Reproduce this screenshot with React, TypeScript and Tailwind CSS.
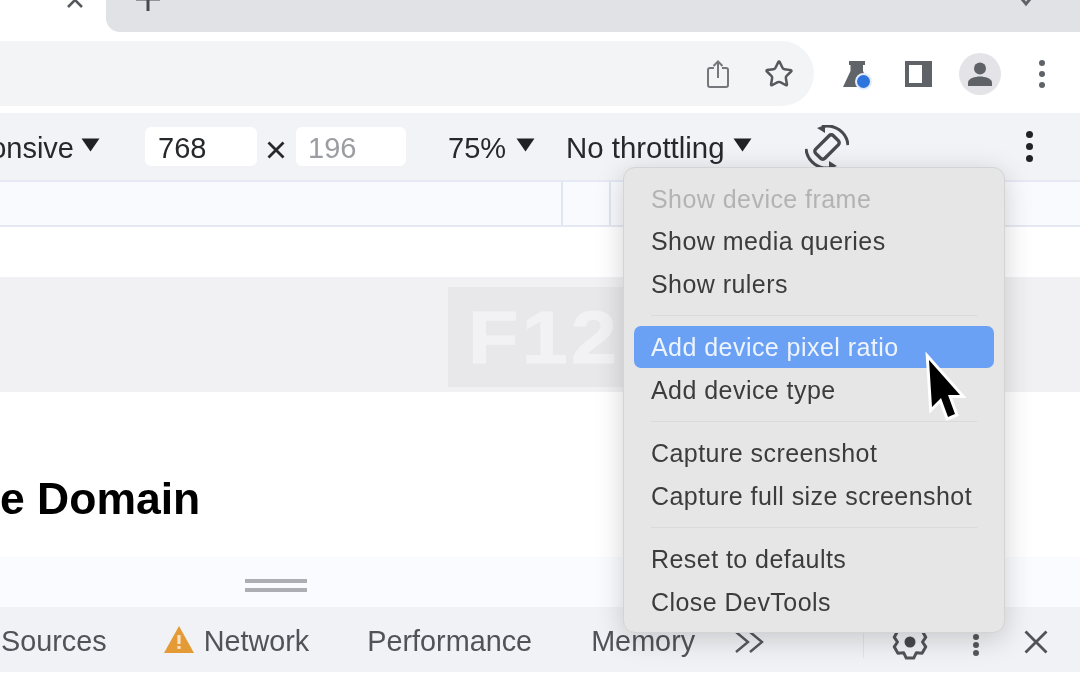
import { Star } from "lucide-react";

const font = "font-['Liberation_Sans',Arial,sans-serif]";

function Caret({ className = "" }: { className?: string }) {
  return (
    <svg width="19" height="14" viewBox="0 0 19 14" className={className}>
      <path d="M0.5 0.5H18.5L9.5 13.5Z" fill="#1f2125" />
    </svg>
  );
}

function Dots({ r = 3, gap = 11, fill = "#5f6368" }: { r?: number; gap?: number; fill?: string }) {
  const h = gap * 2 + r * 2;
  return (
    <svg width={r * 2} height={h} viewBox={`0 0 ${r * 2} ${h}`}>
      <circle cx={r} cy={r} r={r} fill={fill} />
      <circle cx={r} cy={r + gap} r={r} fill={fill} />
      <circle cx={r} cy={r + gap * 2} r={r} fill={fill} />
    </svg>
  );
}

// six lobed outline of the devtools gear
function gearPath(cx: number, cy: number) {
  const at = (deg: number, r: number) => {
    const a = (deg * Math.PI) / 180;
    return `${cx + r * Math.cos(a)} ${cy + r * Math.sin(a)}`;
  };
  const parts: string[] = [];
  for (let k = 0; k < 6; k++) {
    const a = 90 + k * 60;
    parts.push(at(a - 13, 16.5), at(a + 13, 16.5), at(a + 30, 12.5));
  }
  return `M${parts.join("L")}Z`;
}

function MenuItem({ label, disabled, active }: { label: string; disabled?: boolean; active?: boolean }) {
  return (
    <div
      className={`mx-[10px] flex h-[42.5px] items-center rounded-[7px] pt-[2px] pl-[17px] text-[25px] tracking-[0.45px] whitespace-nowrap ${
        active ? "bg-[#6ba1f5] text-[#eef4fe]" : disabled ? "text-[#b3b3b3]" : "text-[#3c3c3c]"
      }`}
    >
      {label}
    </div>
  );
}

function MenuSep() {
  return (
    <div className="flex h-[21px] items-center pr-[27px] pl-[27px]">
      <div className="h-px w-full bg-[#dadada]" />
    </div>
  );
}

function OptionsMenu() {
  return (
    <div className="absolute top-[167px] left-[623px] w-[382px] rounded-[12px] border border-[#d4d4d4] bg-[#e6e6e6] pt-[9px] pb-[9px] shadow-[0_6px_28px_rgba(0,0,0,0.18)]">
      <MenuItem label="Show device frame" disabled />
      <MenuItem label="Show media queries" />
      <MenuItem label="Show rulers" />
      <MenuSep />
      <MenuItem label="Add device pixel ratio" active />
      <MenuItem label="Add device type" />
      <MenuSep />
      <MenuItem label="Capture screenshot" />
      <MenuItem label="Capture full size screenshot" />
      <MenuSep />
      <MenuItem label="Reset to defaults" />
      <MenuItem label="Close DevTools" />
    </div>
  );
}

function Cursor() {
  return (
    <svg className="absolute top-[350px] left-[922px]" width="50" height="76" viewBox="0 0 50 76">
      <path
        d="M7 10L10 57L19 48L26 67L33 64L26 45L38 45Z"
        fill="#000"
        stroke="#fff"
        strokeWidth="6"
        paintOrder="stroke"
      />
    </svg>
  );
}

function TabStrip() {
  return (
    <div className="flex h-[32px] overflow-hidden">
      <div className="relative w-[106px] bg-white">
        <svg className="absolute top-[-9px] left-[66px]" width="18" height="18" viewBox="0 0 18 18">
          <path d="M2 2L16 16M16 2L2 16" stroke="#55585c" strokeWidth="2.6" />
        </svg>
      </div>
      <div className="relative flex-1 rounded-bl-[14px] bg-[#e1e2e6]">
        <svg className="absolute top-[-13px] left-[30px]" width="24" height="24" viewBox="0 0 24 24">
          <path d="M12 0V24M0 12H24" stroke="#46494e" strokeWidth="3" />
        </svg>
        <svg className="absolute top-[-9px] left-[908px]" width="24" height="16" viewBox="0 0 24 16">
          <path d="M3 2L12 13L21 2" fill="none" stroke="#5f6368" strokeWidth="3" />
        </svg>
      </div>
    </div>
  );
}

function AddressRow() {
  return (
    <div className="flex h-[81px] items-start bg-white pt-[9px]">
      <div className="flex h-[65px] w-[814px] items-center rounded-r-[33px] bg-[#f3f4f6] pl-[707px]">
        <svg width="22" height="28" viewBox="0 0 22 28" fill="none" stroke="#74777c" strokeWidth="2">
          <path d="M7 8H3A2 2 0 0 0 1 10V25A2 2 0 0 0 3 27H19A2 2 0 0 0 21 25V10A2 2 0 0 0 19 8H15" />
          <path d="M11 18V2M6.5 6L11 1.5L15.5 6" />
        </svg>
        <Star className="ml-[35px]" size={30} color="#55585c" strokeWidth={2} />
      </div>
      <div className="flex h-[65px] flex-1 items-center">
        <div className="relative ml-[29px] h-[26px] w-[28px]">
          <svg width="28" height="26" viewBox="0 0 28 26">
            <path d="M6 0H22V4H20V10L27 26H0L7.5 10V4H6Z" fill="#606367" />
          </svg>
          <div className="absolute top-[14px] left-[14px] h-[13px] w-[13px] rounded-full bg-[#2f73dc] ring-2 ring-[#e3ecfb]" />
        </div>
        <div className="ml-[34px] h-[26px] w-[27px] border-y-[4px] border-r-[10px] border-l-[4px] border-[#5f6368]" />
        <div className="ml-[27px] flex h-[42px] w-[42px] items-center justify-center rounded-full bg-[#e3e3e8]">
          <svg width="26" height="26" viewBox="0 0 26 26" fill="#5f6368">
            <circle cx="13" cy="7.5" r="6" />
            <path d="M1 25V21.5C1 17.5 8 15.5 13 15.5S25 17.5 25 21.5V25Z" />
          </svg>
        </div>
        <div className="ml-[38px] flex items-center">
          <Dots />
        </div>
      </div>
    </div>
  );
}

function DeviceToolbar() {
  return (
    <div className="flex h-[67px] items-center bg-[#f1f3f6] text-[29px] text-[#26282c]">
      <div className="flex w-[74px] shrink-0 justify-end overflow-hidden pt-[4px] whitespace-nowrap">Responsive</div>
      <Caret className="ml-[7px] -translate-y-[2px]" />
      <div className="ml-[45px] flex h-[39px] w-[112px] items-center rounded-[6px] bg-white pt-[4px] pl-[13px]">768</div>
      <svg className="mt-[6px] ml-[9px]" width="20" height="20" viewBox="0 0 20 20">
        <path d="M2.5 2.5L17.5 17.5M17.5 2.5L2.5 17.5" stroke="#26282c" strokeWidth="2.8" />
      </svg>
      <div className="ml-[10px] flex h-[39px] w-[110px] items-center rounded-[6px] bg-white pt-[4px] pl-[12px] text-[#9b9da1]">
        196
      </div>
      <div className="ml-[42px] pt-[4px]">75%</div>
      <Caret className="ml-[10px] -translate-y-[2px]" />
      <div className="ml-[31px] pt-[4px] text-[29.4px] whitespace-nowrap">No throttling</div>
      <Caret className="ml-[8px] -translate-y-[2px]" />
      <svg className="ml-[53px]" width="44" height="44" viewBox="0 0 44 44" fill="none" stroke="#46494e" strokeWidth="3">
        <rect x="15.5" y="9.5" width="13" height="25" rx="3" strokeWidth="3.4" transform="rotate(45 22 22)" />
        <path d="M17 1.6A21 21 0 0 1 43 20" />
        <path d="M1 24A21 21 0 0 0 27 42.4" />
        <path d="M12 3L20 0V8ZM32 41L24 44V36Z" fill="#46494e" stroke="none" />
      </svg>
      <div className="ml-[177px] flex items-center">
        <Dots r={3.5} gap={12} fill="#202226" />
      </div>
    </div>
  );
}

function MediaBar() {
  return (
    <div className="flex h-[47px] border-y-2 border-[#e4e9f3] bg-[#f8fafe] pl-[561px]">
      <div className="h-[43px] w-[2px] bg-[#dfe6f3]" />
      <div className="ml-[46px] h-[43px] w-[2px] bg-[#dfe6f3]" />
    </div>
  );
}

function PageArea() {
  return (
    <div className="relative flex h-[380px] flex-col bg-white">
      <div className="mt-[50px] h-[115px] bg-[#f1f1f3]" />
      <div className="mt-[82px] text-[44.5px] leading-[50px] font-bold text-black">e Domain</div>
      <div className="mt-[33px] flex flex-1 flex-col gap-[5px] bg-[#fafbfe] pt-[22px] pl-[245px]">
        <div className="h-[4px] w-[62px] bg-[#acaeb3]" />
        <div className="h-[4px] w-[62px] bg-[#acaeb3]" />
      </div>
      <div className="absolute top-[60px] left-[448px] flex h-[100px] w-[194px] items-center bg-[#e8e8ea] pl-[20px] text-[75px] font-bold tracking-[3px] text-[#f2f2f4] [-webkit-text-stroke:1px_#f2f2f4]">
        <span className="inline-block origin-left scale-x-[1.1]">F12</span>
      </div>
    </div>
  );
}

function DevToolsTabs() {
  return (
    <div className="flex h-[65px] items-center bg-[#f1f2f5] pt-[4px] text-[28.8px] text-[#505358]">
      <div className="ml-[1px]">Sources</div>
      <svg className="mt-[-4px] ml-[57px]" width="30" height="27" viewBox="0 0 30 27">
        <path d="M15 0L30 27H0Z" fill="#e59b35" />
        <path d="M13.4 9H16.6V18H13.4ZM13.4 20H16.6V23H13.4Z" fill="#f5e2c5" />
      </svg>
      <div className="ml-[10px]">Network</div>
      <div className="ml-[58px]">Performance</div>
      <div className="ml-[59px]">Memory</div>
      <svg className="ml-[39px]" width="30" height="24" viewBox="0 0 30 24" fill="none" stroke="#55585c" strokeWidth="2.4">
        <path d="M2 2L14 12L2 22M16 2L28 12L16 22" />
      </svg>
      <div className="ml-[99px] h-[32px] w-px bg-[#e3e4e8]" />
      <svg className="ml-[28px]" width="36" height="36" viewBox="0 0 36 36" fill="none" stroke="#505358" strokeWidth="3">
        <path d={gearPath(18, 18)} strokeLinejoin="round" />
        <circle cx="18" cy="18" r="5.5" fill="#45484d" stroke="none" />
      </svg>
      <div className="mt-[7px] ml-[45px] flex items-center">
        <Dots r={3} gap={8} fill="#55585c" />
      </div>
      <svg className="ml-[45px]" width="24" height="24" viewBox="0 0 24 24">
        <path d="M1.5 1.5L22.5 22.5M22.5 1.5L1.5 22.5" stroke="#505358" strokeWidth="2.8" />
      </svg>
    </div>
  );
}

export default function App() {
  return (
    <div className={`relative h-[678px] w-[1080px] overflow-hidden bg-white blur-[0.6px] ${font}`}>
      <TabStrip />
      <AddressRow />
      <DeviceToolbar />
      <MediaBar />
      <PageArea />
      <DevToolsTabs />
      <OptionsMenu />
      <Cursor />
    </div>
  );
}
